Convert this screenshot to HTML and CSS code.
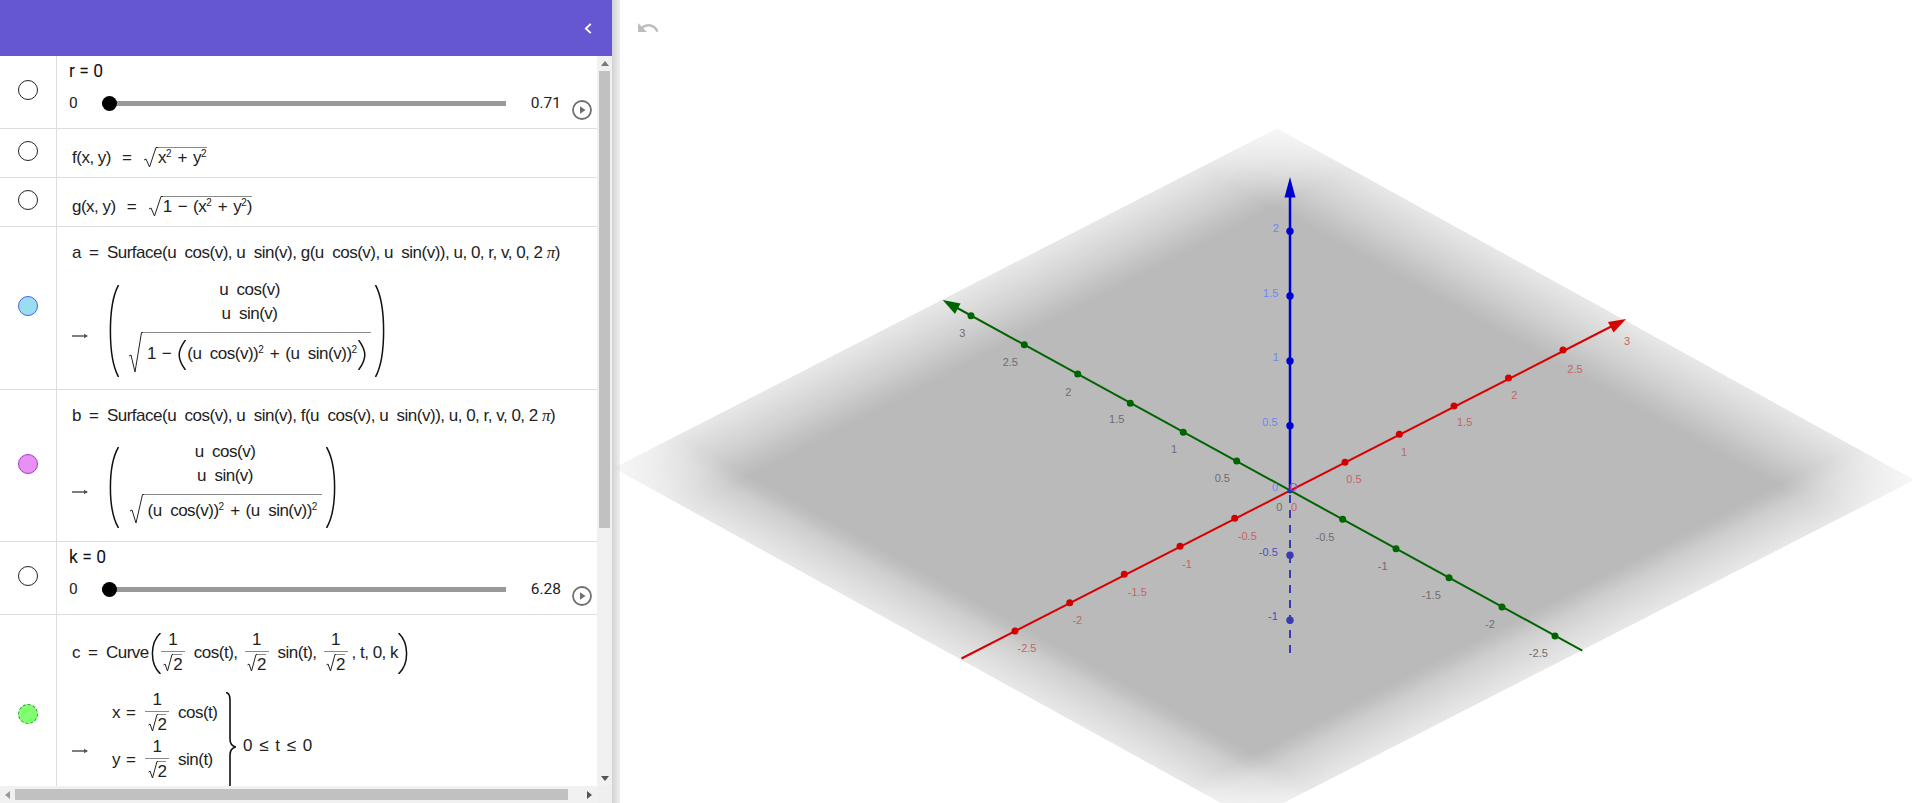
FILE: index.html
```html
<!DOCTYPE html>
<html lang="en">
<head>
<meta charset="utf-8">
<title>GeoGebra 3D</title>
<link rel="stylesheet" href="styles.css">
</head>
<body>
<div class="app">
  <aside class="algebra">
    <header class="topbar">
      <svg class="chev" viewBox="0 0 8 11" width="8" height="11"><path d="M6.8 .8 1.8 5.5l5 4.7" fill="none" stroke="#fff" stroke-width="1.8"/></svg>
    </header>
    <div class="middle">
      <div class="list">
        <section class="row h73">
          <div class="mcol"><span class="marble"></span></div>
          <div class="cell slidercell">
            <div class="name">r = 0</div>
            <div class="sliderline">
              <span class="minv">0</span>
              <span class="track"><span class="thumb"></span></span>
              <span class="maxv">0.71</span>
              <svg class="play" viewBox="0 0 20 20" width="20" height="20"><circle cx="10" cy="10" r="9" fill="none" stroke="#707070" stroke-width="1.8"/><path d="M8 6.2 13.5 10 8 13.8z" fill="#707070"/></svg>
            </div>
          </div>
        </section>
        <section class="row h49">
          <div class="mcol"><span class="marble"></span></div>
          <div class="cell">
            <div class="f top19 endal">
              <span>f(x, y)</span><span class="eq wide">=</span>
              <span class="sqrt"><svg class="rad r21" viewBox="0 0 15 21" preserveAspectRatio="none"><path d="M1 13l2-1 3.5 8L13 .5h2"/></svg><span class="body">x<sup>2</sup><span class="op">+</span>y<sup>2</sup></span></span>
            </div>
          </div>
        </section>
        <section class="row h49">
          <div class="mcol"><span class="marble"></span></div>
          <div class="cell">
            <div class="f top19 endal">
              <span>g(x, y)</span><span class="eq wide">=</span>
              <span class="sqrt"><svg class="rad r21" viewBox="0 0 15 21" preserveAspectRatio="none"><path d="M1 13l2-1 3.5 8L13 .5h2"/></svg><span class="body">1<span class="op">−</span>(x<sup>2</sup><span class="op">+</span>y<sup>2</sup>)</span></span>
            </div>
          </div>
        </section>
        <section class="row h163">
          <div class="mcol"><span class="marble blue"></span></div>
          <div class="cell">
            <div class="f top16"><span>a</span><span class="eq">=</span><span class="cmd">Surface(u&nbsp;&nbsp;cos(v), u&nbsp;&nbsp;sin(v), g(u&nbsp;&nbsp;cos(v), u&nbsp;&nbsp;sin(v)), u, 0, r, v, 0, 2 <i class="pi">π</i>)</span></div>
            <div class="result m19">
              <svg class="arrow" viewBox="0 0 16 6" width="16" height="6"><path d="M0 3h15" stroke="#555" stroke-width="1.5"/><path d="M12 .8 16 3l-4 2.2z" fill="#555"/></svg>
              <svg class="paren l h92" viewBox="0 0 10 92" preserveAspectRatio="none"><path d="M9.5 0C3 12 1.4 28 1.4 46S3 80 9.5 92"/></svg>
              <div class="matrix w256">
                <div class="mrow">u&nbsp;&nbsp;cos(v)</div>
                <div class="mrow">u&nbsp;&nbsp;sin(v)</div>
                <div class="mrow sq">
                  <span class="sqrt"><svg class="rad r41" viewBox="0 0 15 41" preserveAspectRatio="none"><path d="M1 24l2-1 4 17L13.500 .5h1.500"/></svg><span class="body big w228">1<span class="op">−</span><svg class="paren bp" viewBox="0 0 8 30" preserveAspectRatio="none"><path d="M7.500 0C3 6 1.200 10 1.200 15S3 24 7.500 30"/></svg>(u&nbsp;&nbsp;cos(v))<sup>2</sup><span class="op">+</span>(u&nbsp;&nbsp;sin(v))<sup>2</sup><svg class="paren bp" viewBox="0 0 8 30" preserveAspectRatio="none"><path d="M.5 0C5 6 6.800 10 6.800 15S5 24 .5 30"/></svg></span></span>
                </div>
              </div>
              <svg class="paren h92" viewBox="0 0 10 92" preserveAspectRatio="none"><path d="M.5 0C7 12 8.600 28 8.600 46S7 80 .5 92"/></svg>
            </div>
          </div>
        </section>
        <section class="row h152">
          <div class="mcol"><span class="marble pink"></span></div>
          <div class="cell">
            <div class="f top16"><span>b</span><span class="eq">=</span><span class="cmd">Surface(u&nbsp;&nbsp;cos(v), u&nbsp;&nbsp;sin(v), f(u&nbsp;&nbsp;cos(v), u&nbsp;&nbsp;sin(v)), u, 0, r, v, 0, 2 <i class="pi">π</i>)</span></div>
            <div class="result m18">
              <svg class="arrow" viewBox="0 0 16 6" width="16" height="6"><path d="M0 3h15" stroke="#555" stroke-width="1.5"/><path d="M12 .8 16 3l-4 2.2z" fill="#555"/></svg>
              <svg class="paren l h81" viewBox="0 0 10 81" preserveAspectRatio="none"><path d="M9.500 0C3 11 1.400 25 1.400 40.500S3 70 9.500 81"/></svg>
              <div class="matrix w207">
                <div class="mrow">u&nbsp;&nbsp;cos(v)</div>
                <div class="mrow">u&nbsp;&nbsp;sin(v)</div>
                <div class="mrow sq">
                  <span class="sqrt"><svg class="rad r30" viewBox="0 0 15 30" preserveAspectRatio="none"><path d="M1 17l2-1 4 13L13.500 .5h1.500"/></svg><span class="body w178">(u&nbsp;&nbsp;cos(v))<sup>2</sup><span class="op">+</span>(u&nbsp;&nbsp;sin(v))<sup>2</sup></span></span>
                </div>
              </div>
              <svg class="paren h81" viewBox="0 0 10 81" preserveAspectRatio="none"><path d="M.5 0C7 11 8.600 25 8.600 40.500S7 70 .5 81"/></svg>
            </div>
          </div>
        </section>
        <section class="row h73">
          <div class="mcol"><span class="marble"></span></div>
          <div class="cell slidercell">
            <div class="name">k = 0</div>
            <div class="sliderline">
              <span class="minv">0</span>
              <span class="track"><span class="thumb"></span></span>
              <span class="maxv">6.28</span>
              <svg class="play" viewBox="0 0 20 20" width="20" height="20"><circle cx="10" cy="10" r="9" fill="none" stroke="#707070" stroke-width="1.8"/><path d="M8 6.2 13.5 10 8 13.8z" fill="#707070"/></svg>
            </div>
          </div>
        </section>
        <section class="row h202 last">
          <div class="mcol"><span class="marble green"></span></div>
          <div class="cell">
            <div class="f curve">
              <span>c</span><span class="eq">=</span><span class="cmd">Curve</span>
              <svg class="paren h41 pl" viewBox="0 0 10 41" preserveAspectRatio="none"><path d="M9.500 0C3 6 1.400 13 1.400 20.500S3 35 9.500 41"/></svg>
              <span class="frac"><span class="num">1</span><span class="den"><svg class="rad r18" viewBox="0 0 10 18" preserveAspectRatio="none"><path d="M.5 11l1.500-1 2.500 7L9 .5h1"/></svg><span class="two">2</span></span></span>
              <span class="fn">cos(t),</span>
              <span class="frac"><span class="num">1</span><span class="den"><svg class="rad r18" viewBox="0 0 10 18" preserveAspectRatio="none"><path d="M.5 11l1.500-1 2.500 7L9 .5h1"/></svg><span class="two">2</span></span></span>
              <span class="fn">sin(t),</span>
              <span class="frac"><span class="num">1</span><span class="den"><svg class="rad r18" viewBox="0 0 10 18" preserveAspectRatio="none"><path d="M.5 11l1.500-1 2.500 7L9 .5h1"/></svg><span class="two">2</span></span></span>
              <span class="tail">, t, 0, k</span>
              <svg class="paren h41" viewBox="0 0 10 41" preserveAspectRatio="none"><path d="M.5 0C7 6 8.600 13 8.600 20.500S7 35 .5 41"/></svg>
            </div>
            <div class="result m18 piece">
              <svg class="arrow" viewBox="0 0 16 6" width="16" height="6"><path d="M0 3h15" stroke="#555" stroke-width="1.5"/><path d="M12 .8 16 3l-4 2.2z" fill="#555"/></svg>
              <div class="cases">
                <div class="case"><span class="var">x</span><span class="ceq">=</span><span class="frac"><span class="num">1</span><span class="den"><svg class="rad r18" viewBox="0 0 10 18" preserveAspectRatio="none"><path d="M.5 11l1.500-1 2.500 7L9 .5h1"/></svg><span class="two">2</span></span></span><span class="fn">cos(t)</span></div>
                <div class="case"><span class="var">y</span><span class="ceq">=</span><span class="frac"><span class="num">1</span><span class="den"><svg class="rad r18" viewBox="0 0 10 18" preserveAspectRatio="none"><path d="M.5 11l1.500-1 2.500 7L9 .5h1"/></svg><span class="two">2</span></span></span><span class="fn">sin(t)</span></div>
              </div>
              <svg class="brace" viewBox="0 0 10 110" width="10" height="110"><path d="M0 .5C3 1 4 3 4 8V47C4 52 6 54 9.500 55 6 56 4 58 4 63V102C4 107 3 109 0 109.500"/></svg>
              <span class="range">0 ≤ t ≤ 0</span>
            </div>
          </div>
        </section>
      </div>
      <div class="vbar">
        <span class="vbtn"><svg viewBox="0 0 8 5" width="8" height="5"><path d="M4 0 8 5H0z" fill="#777"/></svg></span>
        <span class="vthumb"></span>
        <span class="vrest"></span>
        <span class="vbtn"><svg viewBox="0 0 8 5" width="8" height="5"><path d="M4 5 8 0H0z" fill="#555"/></svg></span>
      </div>
    </div>
    <div class="hbar">
      <span class="hbtn"><svg viewBox="0 0 5 8" width="5" height="8"><path d="M0 4 5 0V8z" fill="#999"/></svg></span>
      <span class="hthumb"></span>
      <span class="hrest"></span>
      <span class="hbtn"><svg viewBox="0 0 5 8" width="5" height="8"><path d="M5 4 0 0V8z" fill="#555"/></svg></span>
      <span class="corner"></span>
    </div>
  </aside>
  <div class="splitter"></div>
  <main class="view3d">
    <svg class="scene" width="1308" height="803" viewBox="612 0 1308 803">
      <defs>
        <linearGradient id="gu" x1="0" y1="0" x2="1" y2="0">
          <stop offset="0" stop-color="#bababa" stop-opacity=".34"/>
          <stop offset=".03" stop-color="#bababa" stop-opacity=".5"/>
          <stop offset=".068" stop-color="#bababa" stop-opacity=".71"/>
          <stop offset=".09" stop-color="#bababa" stop-opacity=".86"/>
          <stop offset=".115" stop-color="#bababa"/>
          <stop offset=".905" stop-color="#bababa"/>
          <stop offset=".922" stop-color="#bababa" stop-opacity=".86"/>
          <stop offset=".936" stop-color="#bababa" stop-opacity=".71"/>
          <stop offset=".97" stop-color="#bababa" stop-opacity=".5"/>
          <stop offset="1" stop-color="#bababa" stop-opacity=".34"/>
        </linearGradient>
        <linearGradient id="gv" x1="0" y1="0" x2="0" y2="1">
          <stop offset="0" stop-color="#fff" stop-opacity=".34"/>
          <stop offset=".03" stop-color="#fff" stop-opacity=".5"/>
          <stop offset=".068" stop-color="#fff" stop-opacity=".71"/>
          <stop offset=".09" stop-color="#fff" stop-opacity=".86"/>
          <stop offset=".115" stop-color="#fff"/>
          <stop offset=".905" stop-color="#fff"/>
          <stop offset=".922" stop-color="#fff" stop-opacity=".86"/>
          <stop offset=".936" stop-color="#fff" stop-opacity=".71"/>
          <stop offset=".97" stop-color="#fff" stop-opacity=".5"/>
          <stop offset="1" stop-color="#fff" stop-opacity=".34"/>
        </linearGradient>
        <mask id="mv" maskUnits="userSpaceOnUse" x="0" y="0" width="100" height="100"><rect width="100" height="100" fill="url(#gv)"/></mask>
      </defs>
      <g transform="matrix(6.38 3.52 -6.64 3.4 1277 128)"><rect width="100" height="100" fill="url(#gu)" mask="url(#mv)"/></g>

      <g class="ax-g">
        <path d="M1582.300 650.700 950 304" fill="none" stroke="#006400" stroke-width="2"/>
        <path d="M942.700 300 960.500 303.500 955 314z" fill="#006400"/>
        <circle cx="971" cy="315.700" r="3.500"/><circle cx="1024.300" cy="344.700" r="3.500"/><circle cx="1077.700" cy="374" r="3.500"/><circle cx="1130.300" cy="403.300" r="3.500"/><circle cx="1183.300" cy="432.300" r="3.500"/><circle cx="1236.700" cy="461" r="3.500"/>
        <circle cx="1342.700" cy="519.300" r="3.500"/><circle cx="1396" cy="548.700" r="3.500"/><circle cx="1449" cy="577.700" r="3.500"/><circle cx="1502" cy="607" r="3.500"/><circle cx="1555" cy="636" r="3.500"/>
      </g>
      <g class="ax-r">
        <path d="M961.500 658.500 1618 323" fill="none" stroke="#d80000" stroke-width="2"/>
        <path d="M1626 319 1613.500 332.500 1608 322z" fill="#d80000"/>
        <circle cx="1015" cy="631" r="3.500"/><circle cx="1069.700" cy="602.700" r="3.500"/><circle cx="1124.300" cy="574.300" r="3.500"/><circle cx="1180" cy="546.300" r="3.500"/><circle cx="1234.700" cy="518.300" r="3.500"/>
        <circle cx="1345" cy="462.300" r="3.500"/><circle cx="1399.300" cy="434.300" r="3.500"/><circle cx="1454" cy="406" r="3.500"/><circle cx="1508.500" cy="378" r="3.500"/><circle cx="1563" cy="350" r="3.500"/>
      </g>
      <g class="ax-b">
        <path d="M1290 491V190" fill="none" stroke="#0000cd" stroke-width="2.500"/>
        <path d="M1290 177 1295.500 197.500H1284.500z" fill="#0000cd"/>
        <circle cx="1290" cy="231.300" r="3.700"/><circle cx="1290" cy="296" r="3.700"/><circle cx="1290" cy="361" r="3.700"/><circle cx="1290" cy="425.700" r="3.700"/>
      </g>
      <g class="ax-d">
        <path d="M1290 495V657" fill="none" stroke="#3a3ab0" stroke-width="2" stroke-dasharray="8 7"/>
        <circle cx="1290" cy="555.300" r="3.700"/><circle cx="1290" cy="620.300" r="3.700"/>
      </g>
      <circle cx="1290" cy="491" r="2.500" fill="#1a3aa0"/>

      <g class="lbl lg">
        <text x="962.300" y="337">3</text><text x="1010.300" y="366">2.5</text><text x="1068.300" y="395.500">2</text><text x="1116.700" y="423">1.5</text><text x="1174" y="453">1</text><text x="1222.300" y="482">0.5</text><text x="1279.300" y="511">0</text><text x="1325" y="540.500">-0.5</text><text x="1382.700" y="569.500">-1</text><text x="1431.300" y="598.500">-1.5</text><text x="1490" y="628">-2</text><text x="1538.300" y="656.500">-2.5</text>
      </g>
      <g class="lbl lr">
        <text x="1294" y="511">0</text><text x="1354" y="483">0.5</text><text x="1404" y="455.500">1</text><text x="1464.700" y="426">1.5</text><text x="1514.300" y="399">2</text><text x="1575" y="372.500">2.5</text><text x="1627" y="344.500">3</text><text x="1247.300" y="539.500">-0.5</text><text x="1187" y="567.500">-1</text><text x="1137.300" y="595.500">-1.5</text><text x="1077.300" y="624">-2</text><text x="1027" y="652">-2.5</text>
      </g>
      <g class="lbl lb">
        <text x="1275.700" y="232">2</text><text x="1270.700" y="296.500">1.5</text><text x="1275.700" y="361">1</text><text x="1270" y="425.500">0.5</text><text x="1275" y="490.500">0</text>
      </g>
      <g class="lbl ln">
        <text x="1268.300" y="555.500">-0.5</text><text x="1273" y="620">-1</text>
      </g>
      <text class="lbl lo" x="1293.300" y="490.500">O</text>
    </svg>
    <svg class="undo" viewBox="0 0 24 24" width="24" height="24"><path d="M12.500 8c-2.650 0-5.050.99-6.900 2.600L2 7v9h9l-3.620-3.620c1.390-1.160 3.160-1.880 5.120-1.880 3.540 0 6.550 2.310 7.600 5.500l2.370-.78C21.080 11.030 17.150 8 12.500 8z" fill="#bdbdbd"/></svg>
  </main>
</div>
</body>
</html>
```
FILE: styles.css
```css
* { box-sizing: border-box; }
html, body { margin: 0; height: 100%; overflow: hidden; background: #fff; }
body { font-family: "Liberation Sans", Arial, sans-serif; color: #1a1a1a; }
.app { display: flex; width: 1920px; height: 803px; }

.algebra { width: 612px; height: 803px; display: flex; flex-direction: column; flex: none; position: relative; z-index: 1; background: #fff; }
.topbar { height: 56px; flex: none; background: #6557d2; display: flex; justify-content: flex-end; align-items: center; padding: 0 20px 0 0; }
.chev { display: block; margin-top: 1px; }
.middle { flex: 1; min-height: 0; display: flex; }
.list { width: 597px; overflow: hidden; flex: none; }

.row { display: flex; width: 597px; border-bottom: 1px solid #dedede; }
.row.last { border-bottom: 0; }
.h73 { height: 73px; }
.h49 { height: 49px; }
.h163 { height: 163px; }
.h152 { height: 152px; }
.h202 { height: 202px; }
.mcol { width: 57px; flex: none; border-right: 1px solid #dedede; display: flex; align-items: center; justify-content: center; padding: 0 1px 4px 0; }
.marble { width: 20px; height: 20px; border-radius: 50%; background: #fff; border: 1px solid #222; display: block; }
.marble.blue { background: #9adcf0; border-color: #4a62e0; }
.marble.pink { background: #e990f5; border-color: #a838d0; }
.marble.green { background: #80ff70; border: 1px dashed #209020; }
.cell { flex: 1; min-width: 0; padding-left: 15px; }

.slidercell { padding-left: 12px; }
.name { font: 17.5px/20px Roboto, "Liberation Sans", sans-serif; padding-top: 5px; color: #111; }
.sliderline { display: flex; align-items: center; height: 20px; margin-top: 12px; font: 15.5px/20px Roboto, "Liberation Sans", sans-serif; color: #222; }
.minv { width: 33px; flex: none; }
.track { width: 404px; height: 5px; flex: none; background: #999; position: relative; }
.thumb { position: absolute; left: 0; top: -5px; width: 15px; height: 15px; border-radius: 50%; background: #000; }
.maxv { width: 55px; flex: none; text-align: right; }
.play { flex: none; margin: 14px 0 0 11px; }

.f { display: flex; align-items: flex-start; font-size: 17px; letter-spacing: -.5px; line-height: 20px; white-space: nowrap; color: #222; }
.top19 { padding-top: 18px; }
.top16 { padding-top: 16px; }
.endal { align-items: flex-end; }
.eq { margin: 0 8px; letter-spacing: 0; }
.eq.wide { margin: 0 11px; }
.cmd { display: block; }
.pi { font-family: "Liberation Serif", serif; }
.sqrt { display: inline-flex; align-items: flex-start; }
.rad { display: block; width: 15px; flex: none; fill: none; stroke: #222; stroke-width: 1; }
.r21 { height: 21px; }
.r41 { height: 41px; }
.r30 { height: 30px; }
.r18 { height: 18px; width: 10px; }
.body { border-top: 1px solid #8a8a8a; display: block; white-space: pre; height: 21px; line-height: 20px; }
.body.big { height: 41px; line-height: 42px; text-align: center; }
.w228 { width: 228px; }
.w178 { width: 178px; height: 30px; line-height: 32px; text-align: center; }
sup { font-size: 10px; line-height: 0; position: relative; top: -6px; vertical-align: baseline; letter-spacing: 0; }
.op { margin: 0 6px; }

.result { display: flex; align-items: center; white-space: nowrap; font-size: 17px; letter-spacing: -.5px; line-height: 24px; color: #222; }
.m19 { margin-top: 19px; }
.m18 { margin-top: 18px; }
.arrow { flex: none; margin: 9px 21px 0 0; }
.paren { flex: none; width: 10px; fill: none; stroke: #111; stroke-width: 1.5; display: block; }
.h92 { height: 92px; }
.h81 { height: 81px; }
.h41 { height: 41px; }
.pl { margin-left: 2px; }
.bp { display: inline-block; width: 8px; height: 30px; margin: 0 1px; vertical-align: middle; }
.matrix { flex: none; display: flex; flex-direction: column; align-items: center; padding-left: 5px; margin-top: -4px; align-self: flex-start; }
.w256 { width: 256px; }
.w207 { width: 207px; }
.mrow { height: 24px; }
.mrow.sq { height: auto; margin-top: 6px; }

.curve { align-items: center; padding-top: 17px; }
.frac { display: inline-flex; flex-direction: column; align-items: center; width: 24px; flex: none; line-height: 20px; }
.num { height: 20px; line-height: 15px; border-bottom: 1px solid #8a8a8a; width: 100%; text-align: center; }
.den { display: inline-flex; align-items: flex-start; height: 20px; margin-top: 2px; }
.two { border-top: 1px solid #8a8a8a; line-height: 19px; height: 19px; }
.fn { margin: 0 7px 0 9px; }
.tail { margin-left: 4px; }

.piece { align-items: flex-start; height: 110px; }
.piece .arrow { margin: 56px 24px 0 0; }
.cases { width: 114px; flex: none; display: flex; flex-direction: column; gap: 5px; }
.case { display: flex; align-items: center; }
.var { width: 14px; }
.ceq { width: 19px; }
.brace { flex: none; fill: none; stroke: #111; stroke-width: 1.6; }
.range { margin: 42px 0 0 7px; word-spacing: 3px; }

.vbar { width: 15px; flex: none; background: #f1f1f1; display: flex; flex-direction: column; align-items: center; }
.vbtn { height: 15px; flex: none; display: flex; align-items: center; justify-content: center; }
.vthumb { width: 11px; height: 457px; background: #c1c1c1; flex: none; }
.vrest { flex: 1; }
.hbar { height: 17px; flex: none; background: #f1f1f1; display: flex; align-items: center; }
.hbtn { width: 15px; height: 17px; flex: none; display: flex; align-items: center; justify-content: center; }
.hthumb { width: 553px; height: 11px; background: #c1c1c1; flex: none; }
.hrest { flex: 1; }
.corner { width: 15px; height: 17px; flex: none; background: #efefef; }

.splitter { width: 8px; flex: none; height: 803px; background: linear-gradient(90deg, #d2d2d2, #efefef); }
.view3d { flex: 1; min-width: 0; height: 803px; position: relative; }
.scene { position: absolute; left: -8px; top: 0; display: block; }
.undo { position: absolute; left: 16px; top: 16px; }
.ax-g circle { fill: #006400; }
.ax-r circle { fill: #d00000; }
.ax-b circle { fill: #0000cd; }
.ax-d circle { fill: #3a3ab0; }
.lbl { font: 11px "Liberation Sans", Arial, sans-serif; text-anchor: middle; }
.lg { fill: #6e6e6e; }
.lr { fill: #c66464; }
.lb { fill: #6f87f0; }
.ln { fill: #4c4cc4; }
.lo { fill: #a040e0; }
```
